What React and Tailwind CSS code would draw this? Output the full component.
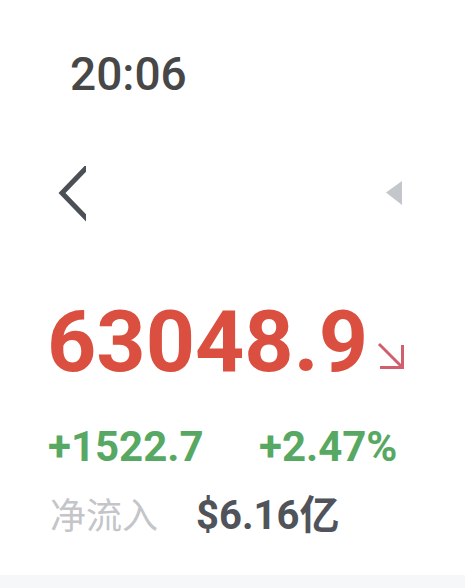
export default function App() {
  return (
    <div className="w-[465px] h-[588px] bg-white flex flex-col overflow-hidden" style={{ fontFamily: "Roboto, 'Noto Sans CJK SC', sans-serif" }}>
      <div className="pl-[70px] mt-[51px] text-[46px] leading-none font-medium text-[#474747]">20:06</div>

      <div className="mt-[69px] flex items-center justify-between pl-[58px] pr-[63px] h-[56px]">
        <svg width="30" height="56" viewBox="0 0 30 56">
          <defs>
            <clipPath id="c">
              <rect x="0" y="0" width="28" height="56" />
            </clipPath>
          </defs>
          <polyline points="30,0 4,27 30,54" fill="none" stroke="#4b4f56" strokeWidth="5" strokeLinejoin="miter" clipPath="url(#c)" />
        </svg>
        <svg width="16" height="26" viewBox="0 0 16 26">
          <polygon points="0,11.5 16,0 16,24" fill="#c3c6ca" />
        </svg>
      </div>

      <div className="mt-[77px] pl-[47px] flex items-end">
        <span className="text-[86px] leading-none font-bold text-[#da4f3f]">63048.9</span>
        <svg width="30" height="30" viewBox="0 0 30 30" className="ml-[8px] mb-[14px]">
          <line x1="3" y1="3" x2="26" y2="26" stroke="#d0606e" strokeWidth="3" />
          <polyline points="4,26.5 26.5,26.5 26.5,4" fill="none" stroke="#d0606e" strokeWidth="3" />
        </svg>
      </div>

      <div className="mt-[41px] pl-[48px] flex items-baseline text-[42px] leading-none font-bold text-[#57a862]">
        <span className="w-[211px]">+1522.7</span>
        <span>+2.47%</span>
      </div>

      <div className="mt-[24px] pl-[50px] flex items-baseline leading-none">
        <span className="text-[36px] text-[#c4c5c9] w-[146px]" style={{ fontFamily: "'Noto Sans CJK SC', sans-serif" }}>净流入</span>
        <span className="text-[40px] font-bold text-[#50535a]">$6.16<span style={{ fontFamily: "'Noto Sans CJK SC', sans-serif" }}>亿</span></span>
      </div>

      <div className="mt-auto h-[13px] bg-[#f5f7f9]" />
    </div>
  );
}
